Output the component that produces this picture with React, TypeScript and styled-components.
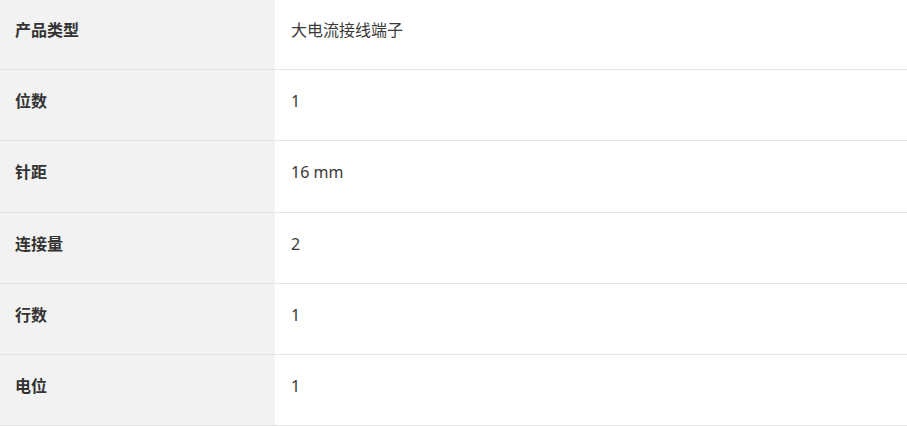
import React from "react";
import styled, { createGlobalStyle } from "styled-components";

const GlobalStyle = createGlobalStyle`
  html, body { margin: 0; padding: 0; background: #ffffff; }
  body { font-family: "Noto Sans", "Noto Sans CJK SC", sans-serif; }
`;

const SpecTable = styled.div`
  display: grid;
  grid-template-columns: 275px 1fr;
  width: 907px;
  margin-top: -2px;
`;

const Row = styled.div`
  display: contents;
`;

const Cell = styled.div<{ $label?: boolean }>`
  box-sizing: border-box;
  height: 71.2px;
  padding: 19px 0 0 ${(p) => (p.$label ? "15px" : "16px")};
  border-top: 1px solid #e3e3e3;
  background: ${(p) => (p.$label ? "#f2f2f2" : "#ffffff")};
  color: ${(p) => (p.$label ? "#333333" : "#3a3a3a")};
  font-family: "Noto Sans", "Noto Sans CJK SC", sans-serif;
  font-size: 16px;
  font-weight: ${(p) => (p.$label ? 700 : 400)};
  line-height: 24px;
`;

const rows: [string, string][] = [
  ["产品类型", "大电流接线端子"],
  ["位数", "1"],
  ["针距", "16 mm"],
  ["连接量", "2"],
  ["行数", "1"],
  ["电位", "1"],
];

const BottomLine = styled.div`
  grid-column: 1 / span 2;
  height: 1px;
  background: #e3e3e3;
`;

export default function App() {
  return (
    <>
      <GlobalStyle />
      <SpecTable>
        {rows.map(([k, v]) => (
          <Row key={k}>
            <Cell $label>{k}</Cell>
            <Cell>{v}</Cell>
          </Row>
        ))}
        <BottomLine />
      </SpecTable>
    </>
  );
}
